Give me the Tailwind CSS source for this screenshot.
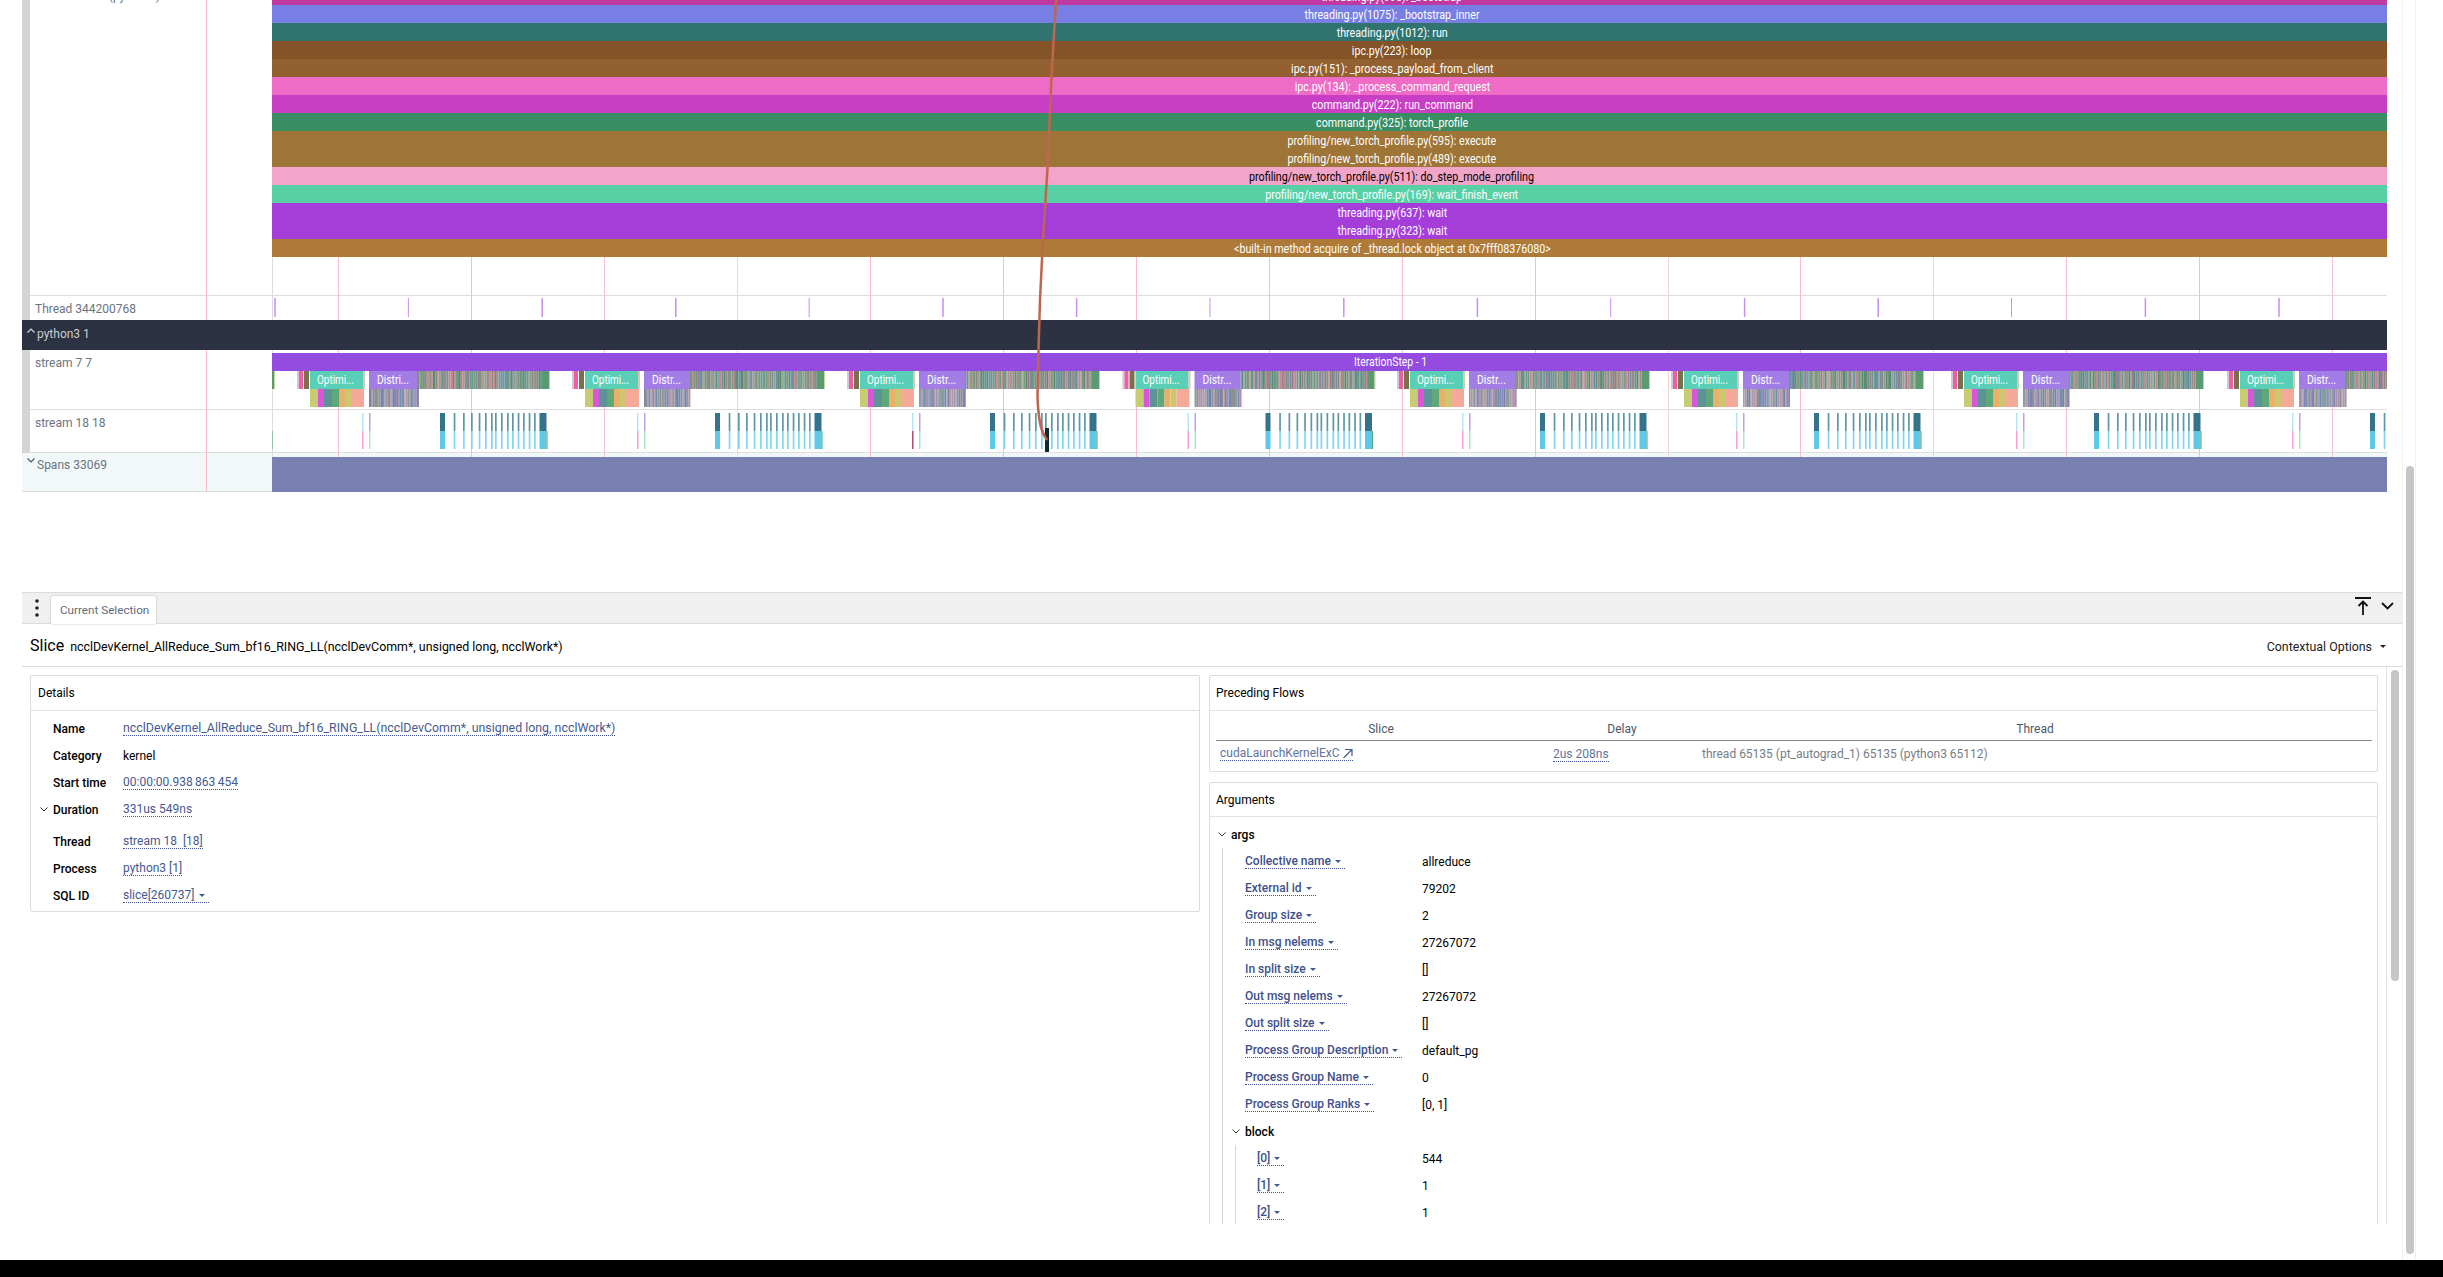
<!DOCTYPE html>
<html lang="en">
<head>
<meta charset="utf-8">
<title>Perfetto</title>
<script src="https://cdn.jsdelivr.net/npm/@tailwindcss/browser@4"></script>
</head>
<body class="m-0 bg-white">
<div class="relative w-[2443px] h-[1277px] overflow-hidden bg-white flex flex-col font-['Roboto',sans-serif] text-[12px] leading-[14px] text-black">

  <!-- grid lines behind the timeline -->
  <svg id="grid" class="absolute left-0 top-0 w-[2388px] h-[492px]" width="2388" height="492"></svg>

  <!-- timeline -->
  <div class="h-[592px] ml-[22px] w-[2365px] shrink-0 flex flex-col">
    <div class="flex">
      <div class="w-[8px] bg-[#d4d4d4] h-[320px]"></div>
      <div class="flex-1 flex flex-col">
        <div class="h-[296px] flex border-b border-[#dedede]">
          <div class="w-[242px] pl-[5px] -mt-[11px] text-[#6b7480] relative z-10">thread 65135 (python3) 65135</div>
          <div class="flex-1 -mt-[13px] h-[270px] relative z-10 text-white flex flex-col">
            <div class="h-[18px] flex items-center justify-center pl-[125px] pt-[1px] bg-[#c039a3]"><span class="inline-block scale-x-[.893]">threading.py(995): _bootstrap</span></div>
            <div class="h-[18px] flex items-center justify-center pl-[125px] pt-[1px] bg-[#777ee4]"><span class="inline-block scale-x-[.893]">threading.py(1075): _bootstrap_inner</span></div>
            <div class="h-[18px] flex items-center justify-center pl-[125px] pt-[1px] bg-[#31746f]"><span class="inline-block scale-x-[.893]">threading.py(1012): run</span></div>
            <div class="h-[18px] flex items-center justify-center pl-[125px] pt-[1px] bg-[#845327]"><span class="inline-block scale-x-[.893]">ipc.py(223): loop</span></div>
            <div class="h-[18px] flex items-center justify-center pl-[125px] pt-[1px] bg-[#936031]"><span class="inline-block scale-x-[.893]">ipc.py(151): _process_payload_from_client</span></div>
            <div class="h-[18px] flex items-center justify-center pl-[125px] pt-[1px] bg-[#ee6cc5]"><span class="inline-block scale-x-[.893]">ipc.py(134): _process_command_request</span></div>
            <div class="h-[18px] flex items-center justify-center pl-[125px] pt-[1px] bg-[#c83fc5]"><span class="inline-block scale-x-[.893]">command.py(222): run_command</span></div>
            <div class="h-[18px] flex items-center justify-center pl-[125px] pt-[1px] bg-[#388e62]"><span class="inline-block scale-x-[.893]">command.py(325): torch_profile</span></div>
            <div class="h-[18px] flex items-center justify-center pl-[125px] pt-[1px] bg-[#9e7437]"><span class="inline-block scale-x-[.893]">profiling/new_torch_profile.py(595): execute</span></div>
            <div class="h-[18px] flex items-center justify-center pl-[125px] pt-[1px] bg-[#9e7437]"><span class="inline-block scale-x-[.893]">profiling/new_torch_profile.py(489): execute</span></div>
            <div class="h-[18px] flex items-center justify-center pl-[125px] pt-[1px] bg-[#f0a5c9] text-black"><span class="inline-block scale-x-[.893]">profiling/new_torch_profile.py(511): do_step_mode_profiling</span></div>
            <div class="h-[18px] flex items-center justify-center pl-[125px] pt-[1px] bg-[#57d0a6]"><span class="inline-block scale-x-[.893]">profiling/new_torch_profile.py(169): wait_finish_event</span></div>
            <div class="h-[18px] flex items-center justify-center pl-[125px] pt-[1px] bg-[#a53dd9]"><span class="inline-block scale-x-[.893]">threading.py(637): wait</span></div>
            <div class="h-[18px] flex items-center justify-center pl-[125px] pt-[1px] bg-[#a53dd9]"><span class="inline-block scale-x-[.893]">threading.py(323): wait</span></div>
            <div class="h-[18px] flex items-center justify-center pl-[125px] pt-[1px] bg-[#ae7a38]"><span class="inline-block scale-x-[.893]">&lt;built-in method acquire of _thread.lock object at 0x7fff08376080&gt;</span></div>
          </div>
        </div>
        <div class="h-[24px] flex">
          <div class="w-[242px] pl-[5px] pt-[6px] text-[#6b7480] relative z-10">Thread 344200768</div>
          <svg id="t0" class="relative z-10" width="2115" height="24"></svg>
        </div>
      </div>
    </div>
    <div class="h-[30px] bg-[#2c3241] relative z-10 flex items-center text-[#c9ccd3]">
      <svg class="ml-[5px] -mt-[9px]" width="8" height="5" viewBox="0 0 8 5" fill="none" stroke="#d5d8de" stroke-width="1.2"><path d="M.5 4.5 4 1l3.500 3.500"/></svg>
      <span class="ml-[2px] -mt-[2px]">python3 1</span>
    </div>
    <div class="flex">
      <div class="w-[8px] bg-[#d4d4d4] h-[103px]"></div>
      <div class="flex-1 flex flex-col">
        <div class="h-[60px] flex border-b border-[#dedede]">
          <div class="w-[242px] pl-[5px] pt-[6px] text-[#6b7480] relative z-10">stream 7 7</div>
          <svg id="t1" class="relative z-10 block" width="2115" height="59"></svg>
        </div>
        <div class="h-[43px] flex border-b border-[#dedede]">
          <div class="w-[242px] pl-[5px] pt-[6px] text-[#6b7480] relative z-10">stream 18 18</div>
          <svg id="t2" class="relative z-10 block" width="2115" height="42"></svg>
        </div>
      </div>
    </div>
    <div class="h-[39px] bg-[#f2f7fa] flex">
      <div class="w-[250px] h-[39px] border-b border-[#dedede] flex items-start pt-[5px] text-[#6b7480]">
        <svg class="ml-[5px]" width="8" height="5" viewBox="0 0 8 5" fill="none" stroke="#4b5563" stroke-width="1.2"><path d="M.5.5 4 4 7.500.5"/></svg>
        <span class="ml-[2px]">Spans 33069</span>
      </div>
      <div class="flex-1 mt-[4px] h-[35px] bg-[#7780b0] relative z-10"></div>
    </div>
  </div>

  <!-- tab bar -->
  <div class="ml-[22px] w-[2380px] h-[32px] shrink-0 bg-[#f0f0f0] border-y border-[#dcdcdc] flex">
    <div class="w-[29px] flex items-center justify-center">
      <svg width="6" height="20" viewBox="0 0 6 20" fill="#222"><circle cx="3" cy="3" r="1.800"/><circle cx="3" cy="10" r="1.800"/><circle cx="3" cy="17" r="1.800"/></svg>
    </div>
    <div class="mt-[3px] w-[105px] h-[28px] bg-white rounded-t-[2px] shadow-[0_0_2px_rgba(0,0,0,.3)] flex items-center pl-[9px] text-[11.7px] text-[#5f6b7a]">Current Selection</div>
    <div class="flex-1"></div>
    <svg class="mt-[3px] mr-[9px]" width="18" height="20" viewBox="0 0 18 20" fill="none" stroke="#111" stroke-width="1.800"><path d="M1 2h16M9 19V6M4.500 10 9 5.500 13.500 10"/></svg>
    <svg class="mt-[9px] mr-[8px]" width="13" height="8" viewBox="0 0 13 8" fill="none" stroke="#111" stroke-width="1.800"><path d="M1 1l5.500 5.500L12 1"/></svg>
  </div>

  <!-- details header -->
  <div class="ml-[22px] w-[2380px] h-[43px] shrink-0 border-b border-[#dcdcdc] flex items-center pl-[8px] pr-[16px] pt-[3px]">
    <span class="text-[16px] leading-[20px] mr-[6px] -mt-[2px]">Slice</span>
    <span class="text-[12.4px]">ncclDevKernel_AllReduce_Sum_bf16_RING_LL(ncclDevComm*, unsigned long, ncclWork*)</span>
    <span class="flex-1"></span>
    <span class="text-[12.4px] text-[#222]">Contextual Options</span>
    <svg class="ml-[8px]" width="6" height="3" viewBox="0 0 6 3" fill="#222"><path d="M0 0h6L3 3z"/></svg>
  </div>

  <!-- details body -->
  <div class="ml-[22px] w-[2380px] h-[557px] shrink-0 flex">
    <div class="w-[2365px] h-[557px] overflow-hidden border-r border-[#e2e2e2] flex items-start pl-[8px] pt-[8px] gap-[9px]">

      <!-- left card -->
      <div class="w-[1170px] h-[237px] shrink-0 border border-[#dcdcdc] rounded-[2px]">
        <div class="h-[35px] border-b border-[#e2e2e2] flex items-center pl-[7px]">Details</div>
        <div class="pt-[4px]">
          <div class="h-[27px] flex items-center"><span class="w-[92px] pl-[22px] font-medium shrink-0">Name</span><span class="text-[12.4px] text-[#46598f] border-b border-dotted border-[#3f4f90]">ncclDevKernel_AllReduce_Sum_bf16_RING_LL(ncclDevComm*, unsigned long, ncclWork*)</span></div>
          <div class="h-[27px] flex items-center"><span class="w-[92px] pl-[22px] font-medium shrink-0">Category</span><span>kernel</span></div>
          <div class="h-[27px] flex items-center"><span class="w-[92px] pl-[22px] font-medium shrink-0">Start time</span><span class="text-[#46598f] border-b border-dotted border-[#3f4f90]">00:00:00.938&#8201;863&#8201;454</span></div>
          <div class="h-[27px] flex items-center"><span class="w-[92px] pl-[9px] font-medium shrink-0 flex items-center"><svg class="mr-[5px]" width="8" height="5" viewBox="0 0 8 5" fill="none" stroke="#333"><path d="M.5.500 4 4 7.500.5"/></svg>Duration</span><span class="text-[#46598f] border-b border-dotted border-[#3f4f90]">331us 549ns</span></div>
          <div class="h-[5px]"></div>
          <div class="h-[27px] flex items-center"><span class="w-[92px] pl-[22px] font-medium shrink-0">Thread</span><span class="text-[#46598f] border-b border-dotted border-[#3f4f90] whitespace-pre">stream 18  [18]</span></div>
          <div class="h-[27px] flex items-center"><span class="w-[92px] pl-[22px] font-medium shrink-0">Process</span><span class="text-[#46598f] border-b border-dotted border-[#3f4f90]">python3 [1]</span></div>
          <div class="h-[27px] flex items-center"><span class="w-[92px] pl-[22px] font-medium shrink-0">SQL ID</span><span class="text-[#46598f] border-b border-dotted border-[#3f4f90] flex items-center">slice[260737]<svg class="ml-[4px] mr-[4px]" width="6" height="3" viewBox="0 0 6 3" fill="#46598f"><path d="M0 0h6L3 3z"/></svg></span></div>
        </div>
      </div>

      <!-- right column -->
      <div class="w-[1169px] shrink-0 flex flex-col gap-[10px]">
        <div class="h-[97px] border border-[#dcdcdc] rounded-[2px]">
          <div class="h-[35px] border-b border-[#e2e2e2] flex items-center pl-[6px]">Preceding Flows</div>
          <div class="mx-[6px] w-[1156px]">
            <div class="grid grid-cols-[330px_152px_674px] h-[30px] pt-[7px] border-b border-[#8a8a8a] items-center text-center text-[#4d5665]">
              <span>Slice</span><span>Delay</span><span>Thread</span>
            </div>
            <div class="grid grid-cols-[330px_152px_674px] h-[25px] items-center">
              <span class="pl-[4px]"><span class="inline-flex items-center text-[#62739f] border-b border-dotted border-[#3f4f90]">cudaLaunchKernelExC<svg class="ml-[2px]" width="11" height="11" viewBox="0 0 11 11" fill="none" stroke="#46598f" stroke-width="1.200"><path d="M1.500 10 10 1.500M3 1.500h7V8"/></svg></span></span>
              <span class="pl-[7px]"><span class="text-[#62739f] border-b border-dotted border-[#3f4f90]">2us 208ns</span></span>
              <span class="pl-[4px] text-[#777c85]">thread 65135 (pt_autograd_1) 65135 (python3 65112)</span>
            </div>
          </div>
        </div>
        <div class="h-[600px] border border-[#dcdcdc] rounded-[2px]">
          <div class="h-[34px] border-b border-[#e2e2e2] flex items-center pl-[6px]">Arguments</div>
          <div class="pt-[4px]">
            <div class="h-[27px] flex items-center pl-[8px] font-medium"><svg class="mr-[5px]" width="8" height="5" viewBox="0 0 8 5" fill="none" stroke="#333"><path d="M.5.500 4 4 7.500.5"/></svg>args</div>
            <div class="ml-[12px] border-l border-[#d8d8d8] pl-[22px]">
              <div class="h-[27px] flex items-center"><span class="w-[177px] shrink-0"><span class="inline-flex items-center font-medium text-[#3e5089] border-b border-dotted border-[#3f4f90]">Collective name<svg class="mx-[4px]" width="6" height="3" viewBox="0 0 6 3" fill="#46598f"><path d="M0 0h6L3 3z"/></svg></span></span><span>allreduce</span></div>
              <div class="h-[27px] flex items-center"><span class="w-[177px] shrink-0"><span class="inline-flex items-center font-medium text-[#3e5089] border-b border-dotted border-[#3f4f90]">External id<svg class="mx-[4px]" width="6" height="3" viewBox="0 0 6 3" fill="#46598f"><path d="M0 0h6L3 3z"/></svg></span></span><span>79202</span></div>
              <div class="h-[27px] flex items-center"><span class="w-[177px] shrink-0"><span class="inline-flex items-center font-medium text-[#3e5089] border-b border-dotted border-[#3f4f90]">Group size<svg class="mx-[4px]" width="6" height="3" viewBox="0 0 6 3" fill="#46598f"><path d="M0 0h6L3 3z"/></svg></span></span><span>2</span></div>
              <div class="h-[27px] flex items-center"><span class="w-[177px] shrink-0"><span class="inline-flex items-center font-medium text-[#3e5089] border-b border-dotted border-[#3f4f90]">In msg nelems<svg class="mx-[4px]" width="6" height="3" viewBox="0 0 6 3" fill="#46598f"><path d="M0 0h6L3 3z"/></svg></span></span><span>27267072</span></div>
              <div class="h-[27px] flex items-center"><span class="w-[177px] shrink-0"><span class="inline-flex items-center font-medium text-[#3e5089] border-b border-dotted border-[#3f4f90]">In split size<svg class="mx-[4px]" width="6" height="3" viewBox="0 0 6 3" fill="#46598f"><path d="M0 0h6L3 3z"/></svg></span></span><span>[]</span></div>
              <div class="h-[27px] flex items-center"><span class="w-[177px] shrink-0"><span class="inline-flex items-center font-medium text-[#3e5089] border-b border-dotted border-[#3f4f90]">Out msg nelems<svg class="mx-[4px]" width="6" height="3" viewBox="0 0 6 3" fill="#46598f"><path d="M0 0h6L3 3z"/></svg></span></span><span>27267072</span></div>
              <div class="h-[27px] flex items-center"><span class="w-[177px] shrink-0"><span class="inline-flex items-center font-medium text-[#3e5089] border-b border-dotted border-[#3f4f90]">Out split size<svg class="mx-[4px]" width="6" height="3" viewBox="0 0 6 3" fill="#46598f"><path d="M0 0h6L3 3z"/></svg></span></span><span>[]</span></div>
              <div class="h-[27px] flex items-center"><span class="w-[177px] shrink-0"><span class="inline-flex items-center font-medium text-[#3e5089] border-b border-dotted border-[#3f4f90]">Process Group Description<svg class="mx-[4px]" width="6" height="3" viewBox="0 0 6 3" fill="#46598f"><path d="M0 0h6L3 3z"/></svg></span></span><span>default_pg</span></div>
              <div class="h-[27px] flex items-center"><span class="w-[177px] shrink-0"><span class="inline-flex items-center font-medium text-[#3e5089] border-b border-dotted border-[#3f4f90]">Process Group Name<svg class="mx-[4px]" width="6" height="3" viewBox="0 0 6 3" fill="#46598f"><path d="M0 0h6L3 3z"/></svg></span></span><span>0</span></div>
              <div class="h-[27px] flex items-center"><span class="w-[177px] shrink-0"><span class="inline-flex items-center font-medium text-[#3e5089] border-b border-dotted border-[#3f4f90]">Process Group Ranks<svg class="mx-[4px]" width="6" height="3" viewBox="0 0 6 3" fill="#46598f"><path d="M0 0h6L3 3z"/></svg></span></span><span>[0, 1]</span></div>
              <div class="h-[27px] flex items-center font-medium -ml-[13px]"><svg class="mr-[5px]" width="8" height="5" viewBox="0 0 8 5" fill="none" stroke="#333"><path d="M.5.500 4 4 7.500.5"/></svg>block</div>
              <div class="-ml-[10px] border-l border-[#d8d8d8] pl-[21px]">
                <div class="h-[27px] flex items-center"><span class="w-[165px] shrink-0"><span class="inline-flex items-center font-medium text-[#3e5089] border-b border-dotted border-[#3f4f90]">[0]<svg class="mx-[4px]" width="6" height="3" viewBox="0 0 6 3" fill="#46598f"><path d="M0 0h6L3 3z"/></svg></span></span><span>544</span></div>
                <div class="h-[27px] flex items-center"><span class="w-[165px] shrink-0"><span class="inline-flex items-center font-medium text-[#3e5089] border-b border-dotted border-[#3f4f90]">[1]<svg class="mx-[4px]" width="6" height="3" viewBox="0 0 6 3" fill="#46598f"><path d="M0 0h6L3 3z"/></svg></span></span><span>1</span></div>
                <div class="h-[27px] flex items-center"><span class="w-[165px] shrink-0"><span class="inline-flex items-center font-medium text-[#3e5089] border-b border-dotted border-[#3f4f90]">[2]<svg class="mx-[4px]" width="6" height="3" viewBox="0 0 6 3" fill="#46598f"><path d="M0 0h6L3 3z"/></svg></span></span><span>1</span></div>
              </div>
            </div>
          </div>
        </div>
      </div>
    </div>
    <!-- inner scrollbar -->
    <div class="w-[15px] pl-[4px] pt-[3px]"><div class="w-[8px] h-[311px] bg-[#c6c6c6] rounded-[4px]"></div></div>
  </div>

  <div class="flex-1"></div>
  <div class="h-[17px] shrink-0 bg-black"></div>

  <!-- page scrollbar -->
  <div class="absolute left-[2402px] top-0 w-[14px] h-[1260px] border-x border-[#f1f1f1] bg-white">
    <div class="absolute left-[3px] top-[466px] w-[8px] h-[788px] bg-[#c6c6c6] rounded-[4px]"></div>
  </div>

  <!-- selection flow arrow and selected slice -->
  <svg class="absolute left-0 top-0 z-20" width="2388" height="492" fill="none">
    <rect x="1045" y="428" width="4" height="24" fill="#0d2a30"/>
    <path d="M1056 0 L1051.500 77 L1047.400 170 L1043 239 L1040 300 L1038.500 350 L1037.500 395 C1038 420 1041 432 1047 440" stroke="#c0654f" stroke-width="2.500"/>
  </svg>
</div>

<script>
(function () {
  var seed = 7;
  function rnd() { seed = (seed * 1103515245 + 12345) & 0x7fffffff; return seed / 0x7fffffff; }
  function pick(a) { return a[Math.floor(rnd() * a.length)]; }
  function r(x, y, w, h, c) { return '<rect x="' + (x - 272) + '" y="' + y + '" width="' + w + '" height="' + h + '" fill="' + c + '"/>'; }
  function t(x, y, s, len) { return '<text x="' + (x - 272) + '" y="' + y + '" font-family="Roboto" font-size="12" fill="#fff" textLength="' + len + '" lengthAdjust="spacingAndGlyphs">' + s + '</text>'; }

  var grid = '<rect x="206" y="0" width="1" height="492" fill="#f9bcc8"/><rect x="272" y="257" width="1" height="200" fill="#dddddd"/>';
  for (var i = 0; i < 16; i++) {
    var gx = Math.round(338 + 132.95 * i);
    var c = (i === 3 || i === 10 || i === 12) ? '#eed5da' : '#f9bcc8';
    grid += '<rect x="' + gx + '" y="0" width="1" height="492" fill="' + c + '"/>';
  }
  document.getElementById('grid').innerHTML = grid;

  var h0 = '';
  for (var j = 0; j < 16; j++) h0 += r(275 + 133.6 * j - 0.75, 2, j % 3 === 1 ? 1 : 1.500, 19, '#c98cf0');
  document.getElementById('t0').innerHTML = h0;

  var warm = ['#6d9a86', '#8a8a80', '#5f8f8a', '#a08c86', '#7a9a78', '#c08a90', '#7090a8', '#5a8a70', '#9a9a98', '#9a7a90', '#6f9a92'];
  var cool = ['#7f86b8', '#a98fb0', '#6d90b0', '#8f8f90', '#7d7fa8', '#b09aa8', '#8a9aa0'];
  var starts = [35, 310, 585, 860, 1135.500, 1410, 1684, 1964, 2240];
  var h1 = r(272, 3, 2115, 18, '#944bdf');
  h1 += t(1354, 16, 'IterationStep - 1', 73);
  var h2 = '';
  starts.forEach(function (s, k) {
    var dw = k === 1 ? 48 : 46;
    var dx = s + 59;
    h1 += r(s - 13, 21, 2, 18, '#cfc8d8') + r(s - 11, 21, 4, 18, '#ef5ea0') + r(s - 6, 21, 5, 18, '#7c6f4d');
    var x = dx + dw;
    while (x < s + 232) { var w = 1 + rnd() * 1.500; h1 += r(x, 21, w, 18, pick(warm)); x += w; }
    h1 += r(s + 232, 21, 7, 18, '#5b9a70') + r(s + 239, 21, 1, 18, '#c6d69c');
    h1 += r(s, 21, 53, 18, '#59cfb7') + r(s + 53, 21, 2, 18, '#d9c8b8');
    h1 += r(dx, 21, dw, 18, '#a27de6');
    if (s > 272) {
      h1 += t(s + 7, 34, 'Optimi...', 37);
      h1 += t(dx + 8, 34, k === 1 ? 'Distri...' : 'Distr...', k === 1 ? 32 : 29);
    }
    var parts = [[0, 8, '#c6cc74'], [8, 6, '#d956d9'], [14, 8, '#5d9296'], [22, 7, '#5fa87a'], [29, 6, '#e8b06a'], [35, 6, '#cdc76f'], [41, 13, '#f5a998']];
    parts.forEach(function (p) { h1 += r(s + p[0], 39, p[1], 18, p[2]); });
    x = dx;
    while (x < dx + dw) { var w2 = 1 + rnd() * 1.500; h1 += r(x, 39, w2, 18, pick(cool)); x += w2; }

    h2 += r(s + 52, 3, 1.500, 18, '#b8e4f8') + r(s + 52, 21, 1.500, 18, k === 3 ? '#b05070' : '#f5a0d8');
    h2 += r(s + 59, 3, 1.500, 18, '#b8a0ec') + r(s + 59, 21, 1.500, 18, '#a8e8c0');
    h2 += r(s + 130, 3, 5, 18, '#34738a') + r(s + 130, 21, 5, 18, '#5dc8e8');
    [143.700, 153, 161, 168.700, 175, 181, 185, 191, 197, 202, 207.700, 213, 218.700, 224].forEach(function (o) {
      h2 += r(s + o, 3, 1.700, 18, '#5f95a6') + r(s + o, 21, 1.700, 18, '#7fd6ef');
    });
    h2 += r(s + 229.500, 3, 7, 18, '#34738a') + r(s + 229.500, 21, 7, 18, '#5dc8e8') + r(s + 236.500, 21, 1, 18, '#4fa870');
  });
  document.getElementById('t1').innerHTML = h1;
  document.getElementById('t2').innerHTML = h2;
})();
</script>
</body>
</html>
